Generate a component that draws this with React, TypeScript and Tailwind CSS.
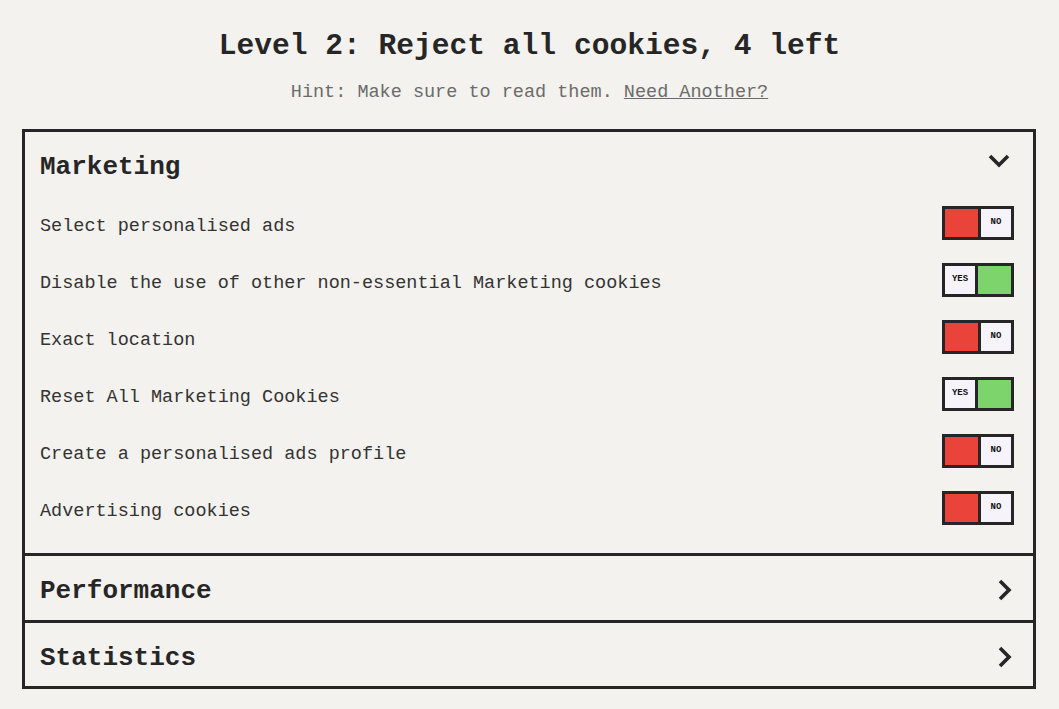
const rows: { label: string; on: boolean }[] = [
  { label: 'Select personalised ads', on: false },
  { label: 'Disable the use of other non-essential Marketing cookies', on: true },
  { label: 'Exact location', on: false },
  { label: 'Reset All Marketing Cookies', on: true },
  { label: 'Create a personalised ads profile', on: false },
  { label: 'Advertising cookies', on: false },
];

const Toggle = ({ on }: { on: boolean }) => (
  <div className="flex w-[72px] h-[34px] border-[3px] border-[#262626] bg-[#262626] gap-[3px]">
    {on ? (
      <>
        <div className="w-[30px] bg-[#f6f4fa] flex items-center justify-center text-[9px] font-bold text-[#111]">YES</div>
        <div className="flex-1 bg-[#7dd36c]" />
      </>
    ) : (
      <>
        <div className="w-[33px] bg-[#ea433a]" />
        <div className="flex-1 bg-[#f6f4fa] flex items-center justify-center text-[9px] font-bold text-[#111]">NO</div>
      </>
    )}
  </div>
);

const ChevronRight = () => (
  <svg width="14" height="22" viewBox="0 0 14 22" className="mt-[4px]">
    <polyline points="2,2 11,11 2,20" fill="none" stroke="#262626" strokeWidth="3.6" />
  </svg>
);

const ChevronDown = () => (
  <svg width="22" height="14" viewBox="0 0 22 14" className="mb-[5px]">
    <polyline points="2,2 11,11 20,2" fill="none" stroke="#262626" strokeWidth="3.6" />
  </svg>
);

const App = () => {
  return (
    <div className="min-h-screen bg-[#f3f2ee] text-[#262626] pt-[26px]" style={{ fontFamily: '"Liberation Mono", "DejaVu Sans Mono", monospace' }}>
      <h1 className="text-center text-[29.6px] leading-[40px] font-bold">Level 2: Reject all cookies, 4 left</h1>
      <p className="text-center text-[18.5px] leading-[24px] text-[#6b6b6b] mt-[15px]">
        Hint: Make sure to read them. <span className="underline">Need Another?</span>
      </p>

      <div className="w-[1014px] ml-[22px] mt-[24px] border-[3px] border-[#262626]">
        <div className="pb-[17px]">
          <div className="h-[62px] flex items-center justify-between pl-[15px] pr-[23px]">
            <h2 className="text-[26px] font-bold pt-[8px]">Marketing</h2>
            <ChevronDown />
          </div>
          {rows.map((r) => (
            <div key={r.label} className="h-[57px] flex items-center justify-between pl-[15px] pr-[19px]">
              <span className="text-[18.5px] text-[#333] pt-[8px]">{r.label}</span>
              <Toggle on={r.on} />
            </div>
          ))}
        </div>
        <div className="h-[67px] border-t-[3px] border-[#262626] flex items-center justify-between pl-[15px] pr-[21px]">
          <h2 className="text-[26px] font-bold pt-[6px]">Performance</h2>
          <ChevronRight />
        </div>
        <div className="h-[66px] border-t-[3px] border-[#262626] flex items-center justify-between pl-[15px] pr-[21px]">
          <h2 className="text-[26px] font-bold pt-[7px]">Statistics</h2>
          <ChevronRight />
        </div>
      </div>
    </div>
  );
};

export default App;
